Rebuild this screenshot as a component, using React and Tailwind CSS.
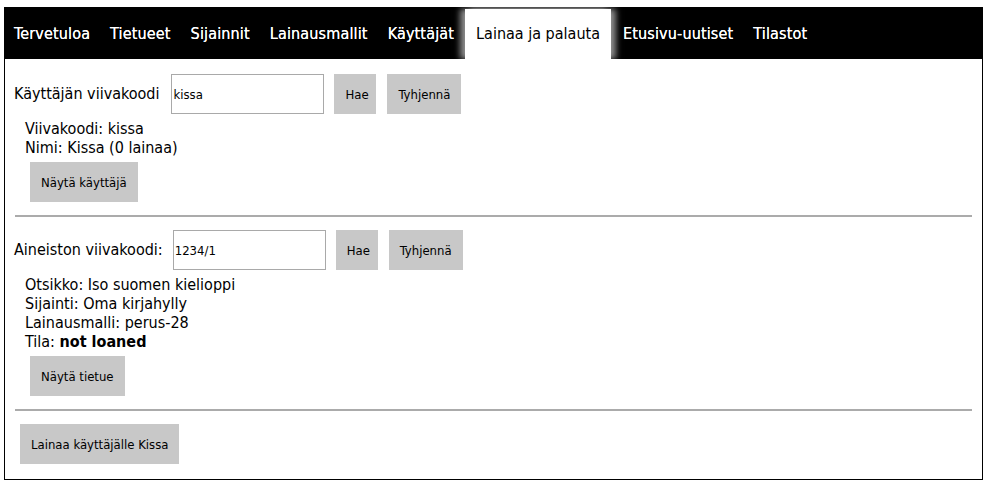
import React, { useState } from 'react';

const tabs = ['Tervetuloa', 'Tietueet', 'Sijainnit', 'Lainausmallit', 'Käyttäjät', 'Lainaa ja palauta', 'Etusivu-uutiset', 'Tilastot'];

const Btn = ({ children, className = '' }) => (
  <button className={`block h-[40px] px-[11px] bg-[#c8c8c8] text-[13px] leading-none text-black ${className}`}>{children}</button>
);

const SearchRow = ({ label, value, onChange, inputClass }) => (
  <div className="flex items-center h-[40px]">
    <span className="text-[16px]">{label}</span>
    <input
      value={value}
      onChange={(e) => onChange(e.target.value)}
      className={`h-[40px] w-[153px] border border-[#a9a9a9] px-[1px] text-[13px] outline-none ${inputClass}`}
    />
    <Btn className="ml-[10px] w-[42px] px-0">Hae</Btn>
    <Btn className="ml-[11px]">Tyhjennä</Btn>
  </div>
);

export default function App() {
  const [user, setUser] = useState('kissa');
  const [item, setItem] = useState('1234/1');
  const active = 'Lainaa ja palauta';

  return (
    <div className="pt-[7px] pl-[4px] w-[983px] text-black" style={{ fontFamily: 'Tahoma, "DejaVu Sans Condensed", "DejaVu Sans", sans-serif' }}>
      <nav className="flex items-end h-[52px] bg-black">
        {tabs.map((t) =>
          t === active ? (
            <div
              key={t}
              className="h-[50px] ml-[1px] mr-[2px] px-[11px] flex items-center bg-white text-[16px] text-black shadow-[-5px_0_6px_0_rgba(255,255,255,0.55),5px_0_6px_0_rgba(255,255,255,0.55)]"
            >
              {t}
            </div>
          ) : (
            <div key={t} className="h-[50px] px-[10px] flex items-center text-white text-[16px] tracking-[0.15px] [text-shadow:0_0_0.4px_#fff]">
              {t}
            </div>
          )
        )}
      </nav>
      <div className="border-x border-b border-black pl-[9px] pr-[10px] pt-[15px] pb-[15px]">
        <SearchRow label="Käyttäjän viivakoodi" value={user} onChange={setUser} inputClass="ml-[12px]" />
        <div className="pl-[11px] pt-[5px] text-[16px] leading-[19px]">
          <div>Viivakoodi: kissa</div>
          <div>Nimi: Kissa (0 lainaa)</div>
          <Btn className="mt-[5px] ml-[5px]">Näytä käyttäjä</Btn>
        </div>
        <div className="ml-[1px] mt-[13px] mb-[13px] h-[2px] bg-[#ababab]" />
        <SearchRow label="Aineiston viivakoodi:" value={item} onChange={setItem} inputClass="ml-[10px]" />
        <div className="pl-[11px] pt-[5px] text-[16px] leading-[19px]">
          <div>Otsikko: Iso suomen kielioppi</div>
          <div>Sijainti: Oma kirjahylly</div>
          <div>Lainausmalli: perus-28</div>
          <div>
            Tila: <b>not loaned</b>
          </div>
          <Btn className="mt-[5px] ml-[5px]">Näytä tietue</Btn>
        </div>
        <div className="ml-[1px] mt-[13px] mb-[13px] h-[2px] bg-[#ababab]" />
        <Btn className="ml-[6px]">Lainaa käyttäjälle Kissa</Btn>
      </div>
    </div>
  );
}
